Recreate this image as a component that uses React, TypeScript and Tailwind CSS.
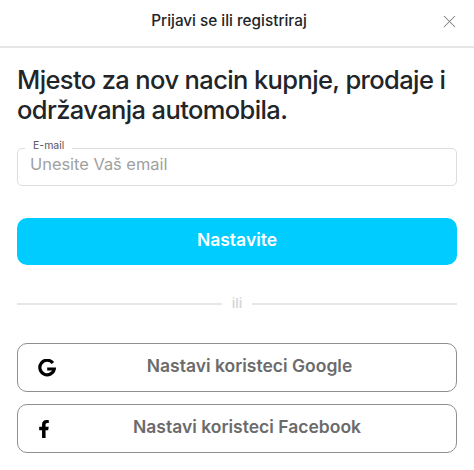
import React from 'react'
import { FaFacebookF } from 'react-icons/fa'
import { X } from 'lucide-react'

function GoogleIcon() {
  return (
    <svg width="18" height="18" viewBox="0 0 18 18" fill="none">
      <path d="M14.9 4A7.3 7.3 0 1 0 16.3 10H9.2" stroke="#000" strokeWidth="3.2" />
    </svg>
  )
}

function SocialButton({ icon, label, className = '' }: { icon: React.ReactNode; label: string; className?: string }) {
  return (
    <button className={`relative flex h-[49px] w-full items-center justify-center rounded-[10px] border border-[#8f8f8f] bg-white pb-[3px] text-[17.5px] font-semibold text-[#6b6b6b] ${className}`}>
      <span className="absolute left-[20px] top-1/2 flex w-[18px] -translate-y-1/2 items-center justify-center">
        {icon}
      </span>
      {label}
    </button>
  )
}

export default function App() {
  return (
    <div className="h-[470px] w-[474px] overflow-hidden bg-white font-['Inter',sans-serif]">
      {/* Header */}
      <div className="relative flex h-[48px] items-center justify-center border-b-2 border-[#e6e6e6] pb-[4px] pr-[16px]">
        <span className="text-[15.3px] font-medium text-[#212529]">Prijavi se ili registriraj</span>
        <button className="absolute right-[14px] top-[11px] text-[#808080]">
          <X size={21} strokeWidth={1.2} />
        </button>
      </div>

      <div className="px-[17px]">
        <h1 className="mt-[17px] text-[25.5px] leading-[30px] font-medium tracking-[-0.62px] text-[#212529]">
          Mjesto za nov nacin kupnje, prodaje i održavanja automobila.
        </h1>

        {/* Email field */}
        <div className="relative mt-[23px] flex h-[38px] items-center rounded-[5px] border border-[#dcdde3] px-[12px]">
          <span className="absolute left-[7px] top-[-10px] bg-white px-[8px] text-[10.5px] leading-[14px] text-[#5c5360]">
            E-mail
          </span>
          <span className="pb-[5px] text-[16.4px] text-[#a0a0a0]">Unesite Vaš email</span>
        </div>

        <button className="mt-[32px] flex h-[47px] w-full items-center justify-center rounded-[10px] bg-[#00ccff] pb-[3px] text-[17.5px] font-semibold text-white">
          Nastavite
        </button>

        {/* Divider */}
        <div className="mt-[30px] flex items-center gap-[10px]">
          <div className="h-[2px] flex-1 bg-[#e6e6e6]" />
          <span className="pb-[1px] text-[13.5px] leading-[16px] font-semibold text-[#d8d8d8]">ili</span>
          <div className="h-[2px] flex-1 bg-[#e6e6e6]" />
        </div>

        <div className="mt-[31px] flex flex-col gap-[12px]">
          <SocialButton className="pl-[25px]" icon={<GoogleIcon />} label="Nastavi koristeci Google" />
          <SocialButton className="pl-[20px]" icon={<span className="-ml-[6px]"><FaFacebookF size={18} color="#000" /></span>} label="Nastavi koristeci Facebook" />
        </div>
      </div>
    </div>
  )
}
